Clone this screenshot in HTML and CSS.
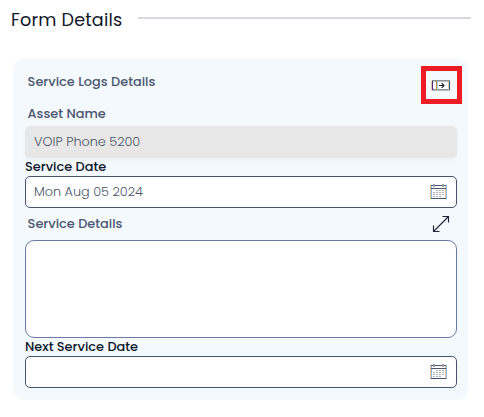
FILE: index.html
```
<!DOCTYPE html>
<html lang="en">
<head>
<meta charset="utf-8">
<title>Form Details</title>
<link rel="stylesheet" href="styles.css">
</head>
<body>
<header class="page-head"><h1>Form Details</h1><span class="rule"></span></header>
<main class="card">
  <div class="card-head"><h2>Service Logs Details</h2></div>
  <div class="marker">
    <svg width="20" height="12" viewBox="0 0 20 12" shape-rendering="crispEdges"><path fill="#fff" d="M1 1h18v9H1z"/><path fill="#8d9494" d="M1 0h18v1H1zM1 9h18v1H1z"/><path fill="#b4b9b9" d="M1 1h18v1H1zM1 10h18v1H1z"/><path fill="#e1c9a5" d="M0 1h1v9H0zM17 1h1v9h-1z"/><path fill="#4b2682" d="M1 1h1v9H1z"/><path fill="#c58a30" d="M5 1h1v9H5z"/><path fill="#8fcde8" d="M6 1h1v9H6z"/><path fill="#285f7d" d="M18 1h1v9h-1z"/><path shape-rendering="auto" d="M8 5.5h5M10.7 3.2L13 5.5l-2.3 2.3" fill="none" stroke="#171b30" stroke-width="1.1"/></svg>
  </div>
  <div class="label muted">Asset Name</div>
  <div class="field disabled">VOIP Phone 5200</div>
  <div class="label">Service Date</div>
  <div class="field">Mon Aug 05 2024
    <svg class="calendar" width="17" height="16" viewBox="0 0 17 16"><use href="#calendar"/></svg>
  </div>
  <div class="label muted tall">Service Details
    <svg class="expand" width="18" height="18" viewBox="0 0 18 18"><path d="M1.5 16.5l15-15M10.5 1.5h6v6M1.5 10.5v6h6" fill="none" stroke="#20253b" stroke-width="1.15"/></svg>
  </div>
  <div class="textarea"></div>
  <div class="label">Next Service Date</div>
  <div class="field">
    <svg class="calendar" width="17" height="16" viewBox="0 0 17 16"><g id="calendar" shape-rendering="crispEdges"><path fill="#f0c090" d="M0 1h1v14H0zM15 2h1v12h-1z"/><path fill="#85bce8" d="M1 2h1v12H1zM16 1h1v14h-1z"/><path fill="#4c5671" d="M1 1h15v1H1zM1 4h15v1H1zM1 14h15v1H1z"/><path fill="#9a9fa8" d="M3 0h2v3H3zM12 0h2v3h-2z"/><path fill="#acb2b9" d="M6 6h2v1H6zM9 6h2v1H9zM12 6h2v1h-2zM3 8h2v1H3zM6 8h2v1H6zM9 8h2v1H9zM12 8h2v1h-2zM3 10h2v1H3zM6 10h2v1H6zM9 10h2v1H9zM12 10h2v1h-2zM3 12h2v1H3zM6 12h2v1H6zM9 12h2v1H9z"/></g></svg>
  </div>
</main>
</body>
</html>
```
FILE: styles.css
```
* { box-sizing: border-box; }
body { margin: 0; background: #fff; color: #10182b; font: 500 12.9px/18px Poppins, Inter, sans-serif; white-space: nowrap; }
.page-head { display: flex; align-items: center; gap: 16px; height: 36px; padding: 2px 13px 0 11px; }
h1, h2 { margin: 0; }
h1 { font-size: 17.6px; font-weight: 400; line-height: 24px; width: 111px; letter-spacing: .2px; padding-top: 1px; }
.rule { flex: 1; height: 2px; margin-top: -3px; background: #d4d9e1; }
.card { position: relative; width: 455px; height: 342px; margin: 22px 0 0 13px; padding: 12px 11px 12px 12px; border-radius: 12px; background: #f3f9fc; }
.card-head { height: 32px; padding: 3px 0 0 2.6px; color: #4c5671; }
h2 { font-size: 12.9px; font-weight: 500; line-height: 18px; }
.marker { position: absolute; top: 8px; left: 408px; width: 41px; height: 38px; border: 5px solid #ed1c24; display: flex; align-items: center; justify-content: center; padding: 2px 1px 0 0; }
.marker svg { display: block; }
.label { height: 18px; display: flex; align-items: center; }
.muted { height: 24px; padding-left: 2.6px; color: #4c5671; }
.tall { height: 32px; justify-content: space-between; padding-right: 7px; }
.field { height: 32px; padding: 0 9px 0 8px; border: 1px solid #465370; border-radius: 5px; background: #fff; display: flex; align-items: center; color: #4c5568; font-size: 12.8px; font-weight: 300; }
.disabled { background: #e7e7e7; border-color: #e7e7e7; box-shadow: 0 2px 4px rgba(0, 0, 0, .04); }
.calendar { margin-left: auto; }
.textarea { height: 98px; border: 1px solid #697ba0; border-radius: 9px; background: #fff; }
```
